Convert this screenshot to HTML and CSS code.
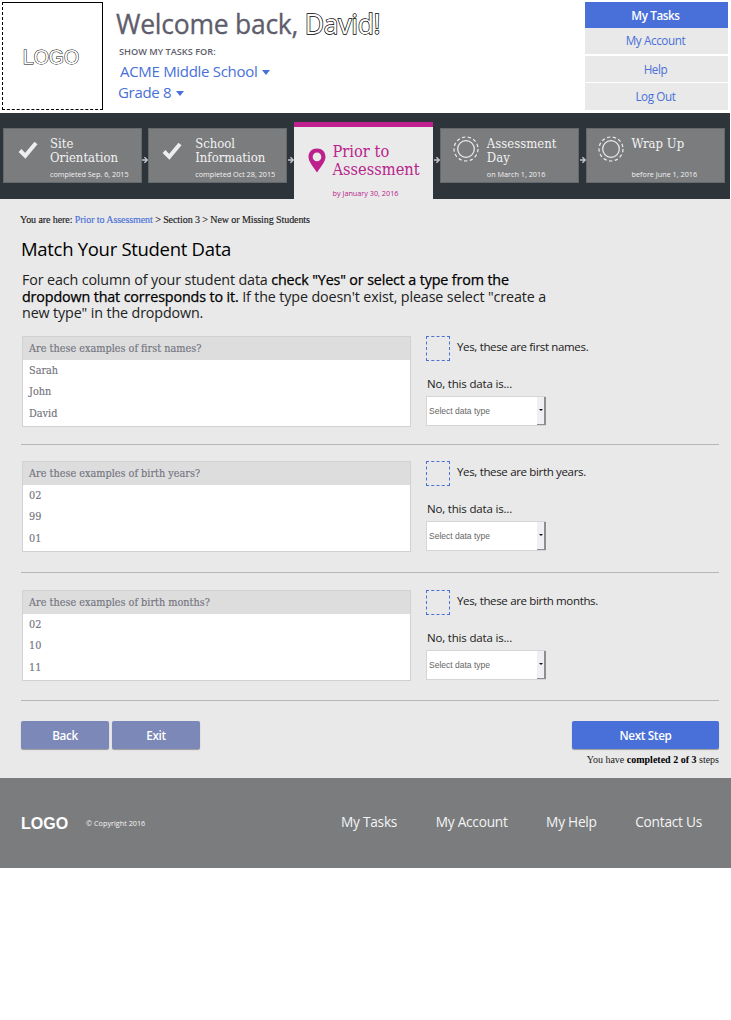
FILE: index.html
```html
<!DOCTYPE html>
<html lang="en">
<head>
<meta charset="utf-8">
<title>Match Your Student Data</title>
<link rel="stylesheet" href="styles.css">
</head>
<body>
<header class="header">
  <div class="logo">LOGO</div>
  <div class="greeting">
    <h1 class="welcome">Welcome back, <span class="user">David!</span></h1>
    <div class="filter-label">SHOW MY TASKS FOR:</div>
    <div class="filter school"><span>ACME Middle School</span><i class="caret"></i></div>
    <div class="filter grade"><span>Grade 8</span><i class="caret"></i></div>
  </div>
  <nav class="menu">
    <a class="menu-item current">My Tasks</a>
    <a class="menu-item account">My Account</a>
    <a class="menu-item">Help</a>
    <a class="menu-item">Log Out</a>
  </nav>
</header>
<section class="steps">
  <div class="step"><svg class="icon check" viewBox="0 0 20 18"><path d="M2 9.500 7.300 14.800 18 2"/></svg><div class="step-text"><h2>Site<br>Orientation</h2><p>completed Sep. 6, 2015</p></div></div>
  <svg class="arrow first" viewBox="0 0 6 8"><path d="M0 4H5M2.400 1.200 5.200 4 2.400 6.800"/></svg>
  <div class="step"><svg class="icon check later" viewBox="0 0 20 18"><path d="M2 9.500 7.300 14.800 18 2"/></svg><div class="step-text"><h2>School<br>Information</h2><p>completed Oct 28, 2015</p></div></div>
  <svg class="arrow" viewBox="0 0 6 8"><path d="M0 4H5M2.400 1.200 5.200 4 2.400 6.800"/></svg>
  <div class="step active"><svg class="pin" viewBox="0 0 18 25"><path fill-rule="evenodd" d="M9 .5C4 .5.5 4 .5 8.800.5 14 5.500 19 9 24.500 12.500 19 17.500 14 17.500 8.800 17.500 4 14 .5 9 .5ZM9 4.600A4.300 4.300 0 1 1 9 13.200 4.300 4.300 0 0 1 9 4.600Z"/></svg><div class="step-text"><h2>Prior to<br>Assessment</h2><p>by January 30, 2016</p></div></div>
  <svg class="arrow" viewBox="0 0 6 8"><path d="M0 4H5M2.400 1.200 5.200 4 2.400 6.800"/></svg>
  <div class="step"><svg class="icon ring" viewBox="0 0 26 26"><circle cx="13" cy="13" r="8.300"/><circle class="dash" cx="13" cy="13" r="12"/></svg><div class="step-text"><h2>Assessment<br>Day</h2><p>on March 1, 2016</p></div></div>
  <svg class="arrow" viewBox="0 0 6 8"><path d="M0 4H5M2.400 1.200 5.200 4 2.400 6.800"/></svg>
  <div class="step"><svg class="icon ring last" viewBox="0 0 26 26"><circle cx="13" cy="13" r="8.300"/><circle class="dash" cx="13" cy="13" r="12"/></svg><div class="step-text"><h2>Wrap Up</h2><p>before June 1, 2016</p></div></div>
</section>
<main class="main">
  <div class="crumbs">You are here: <a>Prior to Assessment</a> &gt; Section 3 &gt; New or Missing Students</div>
  <h1 class="title">Match Your Student Data</h1>
  <p class="intro">For each column of your student data <b>check "Yes" or select a type from the<br>dropdown that corresponds to it.</b> If the type doesn't exist, please select "create a<br>new type" in the dropdown.</p>
  <section class="question">
    <div class="samples"><div class="ask">Are these examples of first names?</div><div>Sarah</div><div>John</div><div>David</div></div>
    <div class="answer"><label class="yes"><i class="box"></i><span>Yes, these are first names.</span></label><div class="no">No, this data is...</div><div class="select"><span>Select data type</span><i class="drop"></i></div></div>
  </section>
  <section class="question second">
    <div class="samples"><div class="ask">Are these examples of birth years?</div><div>02</div><div>99</div><div>01</div></div>
    <div class="answer"><label class="yes"><i class="box"></i><span>Yes, these are birth years.</span></label><div class="no">No, this data is...</div><div class="select"><span>Select data type</span><i class="drop"></i></div></div>
  </section>
  <section class="question third">
    <div class="samples"><div class="ask">Are these examples of birth months?</div><div>02</div><div>10</div><div>11</div></div>
    <div class="answer"><label class="yes"><i class="box"></i><span>Yes, these are birth months.</span></label><div class="no">No, this data is...</div><div class="select"><span>Select data type</span><i class="drop"></i></div></div>
  </section>
  <div class="actions">
    <button class="btn">Back</button><button class="btn">Exit</button><button class="btn next">Next Step</button>
  </div>
  <div class="progress">You have <b>completed 2 of 3</b> steps</div>
</main>
<footer class="footer">
  <div class="foot-logo">LOGO</div>
  <div class="copy">© Copyright 2016</div>
  <nav class="foot-nav"><a>My Tasks</a><a>My Account</a><a>My Help</a><a>Contact Us</a></nav>
</footer>
</body>
</html>
```
FILE: styles.css
```css
* { box-sizing: border-box; }
body { margin: 0; width: 731px; background: #fff; color: #202020; font-family: "Open Sans", "Noto Sans", sans-serif; }
h1, h2, p { margin: 0; font-weight: 400; }

.header { display: flex; height: 113px; padding: 2px 3px 0 2px; }
.logo { width: 101px; height: 108px; border: 1px dashed #000; border-top-style: solid; border-right-style: solid; display: flex; align-items: center; justify-content: center; padding: 2px 3px 0 0; font: 19.500px "Liberation Sans", sans-serif; color: #fff; -webkit-text-stroke: 1px #000; paint-order: stroke fill; }
.greeting { margin-left: 13px; flex: 1; }
.welcome { font-size: 26.500px; line-height: 36px; margin-top: 4px; letter-spacing: -.25px; color: #5e5d6b; -webkit-text-stroke: .3px; white-space: nowrap; }
.user { color: #fff; -webkit-text-stroke: 1.400px #000; paint-order: stroke fill; }
.filter-label { margin: 4px 0 0 3px; font-size: 9.200px; line-height: 12px; font-weight: 600; color: #5e5d6b; }
.filter { display: flex; align-items: center; gap: 5px; font-size: 15px; line-height: 21px; letter-spacing: -.3px; color: #4870d8; }
.school { margin: 3px 0 0 4px; }
.grade { margin-left: 2px; }
.caret { border: 4.500px solid transparent; border-top: 5px solid #4870d8; border-bottom: 0; margin-top: 2px; }
.menu { width: 143px; display: flex; flex-direction: column; }
.menu-item { height: 26.400px; margin-bottom: 1.200px; background: #e9e9e9; color: #4870d8; font-size: 11.700px; line-height: 26px; letter-spacing: -.4px; text-align: center; padding-right: 2px; }
.menu-item.account { line-height: 25px; }
.menu-item.current { height: 26px; margin: 0; background: #4870d8; color: #fff; font-weight: 600; }

.steps { height: 86px; margin-right: 1px; background: #2e353a; padding: 15px 4px 0 3px; display: flex; align-items: flex-start; }
.step { width: 139px; height: 55px; background: #7b7c7e; border: 1px solid #66696c; display: flex; color: #f2f2f2; flex: none; }
.icon { flex: none; fill: none; stroke: #eee; }
.check { width: 20px; height: 18px; margin: 12px 0 0 14px; stroke-width: 4; }
.later { margin: 13px 1px 0 13px; }
.ring { width: 26px; height: 26px; margin: 7px 0 0 12px; stroke-width: 1.200; }
.ring.last { margin-left: 11px; }
.dash { stroke-dasharray: 3.300 2.500; }
.step-text { margin-left: 12px; height: 53px; display: flex; flex-direction: column; white-space: nowrap; }
.ring + .step-text { margin-left: 8px; }
.step h2 { font: 13px/14px "DejaVu Serif Condensed", "DejaVu Serif", serif; font-stretch: condensed; margin-top: 8px; }
.step p { font-size: 7.250px; line-height: 10px; margin-top: auto; margin-bottom: 3px; }
.arrow { width: 6px; height: 8px; margin: 28px 0 0 .8px; fill: none; stroke: #c4c2d4; stroke-width: 1.400; flex: none; }
.arrow.first { margin-left: .2px; }
.active { height: 77px; margin-top: -6px; background: #eaeaea; border: 0; border-top: 5px solid #c0208f; color: #b8248c; }
.pin { width: 18px; height: 25px; margin: 20.500px 0 0 14.500px; fill: #bd208c; flex: none; }
.active .step-text { height: 72px; margin-left: 6px; }
.step.active h2 { font-size: 16.300px; line-height: 18px; margin-top: 16px; }
.step.active p { margin-bottom: 1px; }

.main { height: 579px; background: #e9e9e9; padding: 15px 12px 0 21px; }
.crumbs { margin-left: -1px; font: 10px/12px "Liberation Serif", serif; letter-spacing: -.08px; -webkit-text-stroke: .15px; }
.crumbs a { color: #4870d8; }
.title { margin-top: 11px; font-size: 18.500px; line-height: 24px; letter-spacing: -.3px; color: #000; }
.intro { margin: 11px 0 0 1px; font-size: 14.300px; line-height: 16.500px; letter-spacing: -.13px; color: #222; white-space: nowrap; }
.intro b { font-weight: 400; color: #000; -webkit-text-stroke: .25px #000; }

.question { margin-top: 14px; height: 109px; border-bottom: 1px solid #b5b6bb; display: flex; padding-left: 1px; }
.second { margin-top: 16px; height: 112px; }
.third { margin-top: 17px; height: 111px; }
.samples { width: 389px; height: 91px; background: #fff; border: 1px solid #d0d1d4; font: 10.800px/21.700px "DejaVu Serif Condensed", "DejaVu Serif", serif; font-stretch: condensed; color: #737480; -webkit-text-stroke: .15px; }
.samples div { padding-left: 6px; }
.samples .ask { background: #ddd; height: 23px; line-height: 23px; }
.answer { margin-left: 15px; font-size: 11.500px; }
.yes { display: flex; letter-spacing: -.34px; }
.box { width: 24px; height: 25px; border: 1px dashed #4870d8; margin-right: 7px; }
.yes span { line-height: 22px; }
.no { line-height: 16px; margin: 15px 0 0 1px; letter-spacing: -.18px; }
.select { width: 120px; height: 30px; margin-top: 4px; background: #fff; border: 1px solid #d5d5d5; border-right: 0; display: flex; justify-content: space-between; font: 8.500px/28px "Liberation Sans", sans-serif; color: #666; padding-left: 2px; }
.drop { width: 9px; background: #f0f0f4; border-right: 2px solid #8e8e92; border-bottom: 1px solid #8e8e92; display: flex; align-items: center; justify-content: center; }
.drop::after { content: ""; border: 2px solid transparent; border-top: 2px solid #111; border-bottom: 0; }

.actions { display: flex; gap: 3px; margin-top: 20px; }
.btn { width: 88px; height: 28px; border: 0; border-radius: 2px; background: #7b88b8; color: #fff; font: 600 11.700px/28px "Open Sans", "Noto Sans", sans-serif; letter-spacing: -.35px; padding: 0; box-shadow: 0 1px 1px #999; }
.next { width: 147px; margin-left: auto; background: #4870d8; }
.progress { text-align: right; margin-top: 5px; font: 10px/12px "Liberation Serif", serif; }
.progress b { color: #000; }

.footer { height: 90px; background: #7b7c7e; color: #f4f4f4; display: flex; align-items: center; padding: 0 29px 0 21px; }
.foot-logo { font: bold 16px "Liberation Sans", sans-serif; color: #fff; padding-top: 1px; }
.copy { font-size: 7.250px; margin-left: 18px; }
.foot-nav { display: flex; justify-content: space-between; width: 361px; margin-left: auto; font-size: 13.700px; letter-spacing: -.25px; padding-bottom: 4px; }
```
